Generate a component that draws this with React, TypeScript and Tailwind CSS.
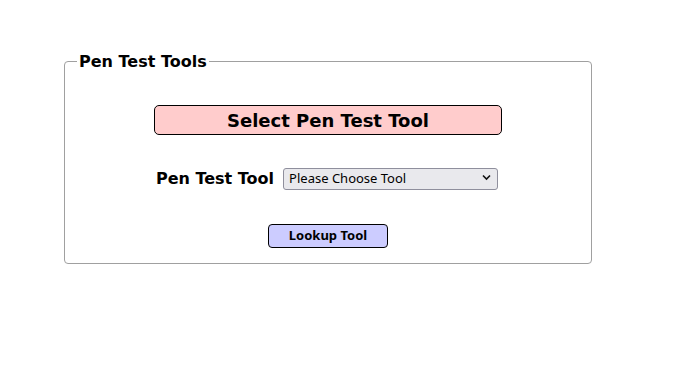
import React from "react";

export default function App() {
  return (
    <div className="w-[691px] h-[375px] bg-white pt-[52px] pl-[64px]" style={{ fontFamily: '"DejaVu Sans", sans-serif' }}>
      <fieldset className="w-[528px] h-[212px] border border-[#a0a0a0] rounded-[4px] px-3 pb-0 flex flex-col items-center">
        <legend className="px-[2px] text-[16px] leading-[19px] font-bold text-black">Pen Test Tools</legend>
        <div className="mt-[34px] w-[348px] h-[30px] bg-[#ffcccc] border border-black rounded-[5px] flex items-center justify-center text-[18px] font-bold text-black">
          Select Pen Test Tool
        </div>
        <div className="mt-[31px] flex items-center gap-[9px] -ml-[2px]">
          <span className="text-[16px] font-bold text-black leading-[19px]">Pen Test Tool</span>
          <div className="relative">
            <select
              className="appearance-none w-[215px] h-[22px] bg-[#e9e9ed] border border-[#8f8f9d] rounded-[3px] pl-[5px] text-[13px] text-black outline-none"
              style={{ fontFamily: '"Noto Sans", sans-serif' }}
              defaultValue=""
            >
              <option value="">Please Choose Tool</option>
            </select>
            <svg className="absolute right-[7px] top-[8px] pointer-events-none" width="9" height="7" viewBox="0 0 9 7">
              <path d="M1 1.5 L4.5 5 L8 1.5" fill="none" stroke="#111" strokeWidth="1.6" />
            </svg>
          </div>
        </div>
        <button
          className="mt-[34px] w-[120px] h-[24px] bg-[#ccccff] border border-black rounded-[4px] text-[13px] font-bold text-black flex items-center justify-center"
          style={{ fontFamily: '"Noto Sans", sans-serif' }}
        >
          Lookup Tool
        </button>
      </fieldset>
    </div>
  );
}
